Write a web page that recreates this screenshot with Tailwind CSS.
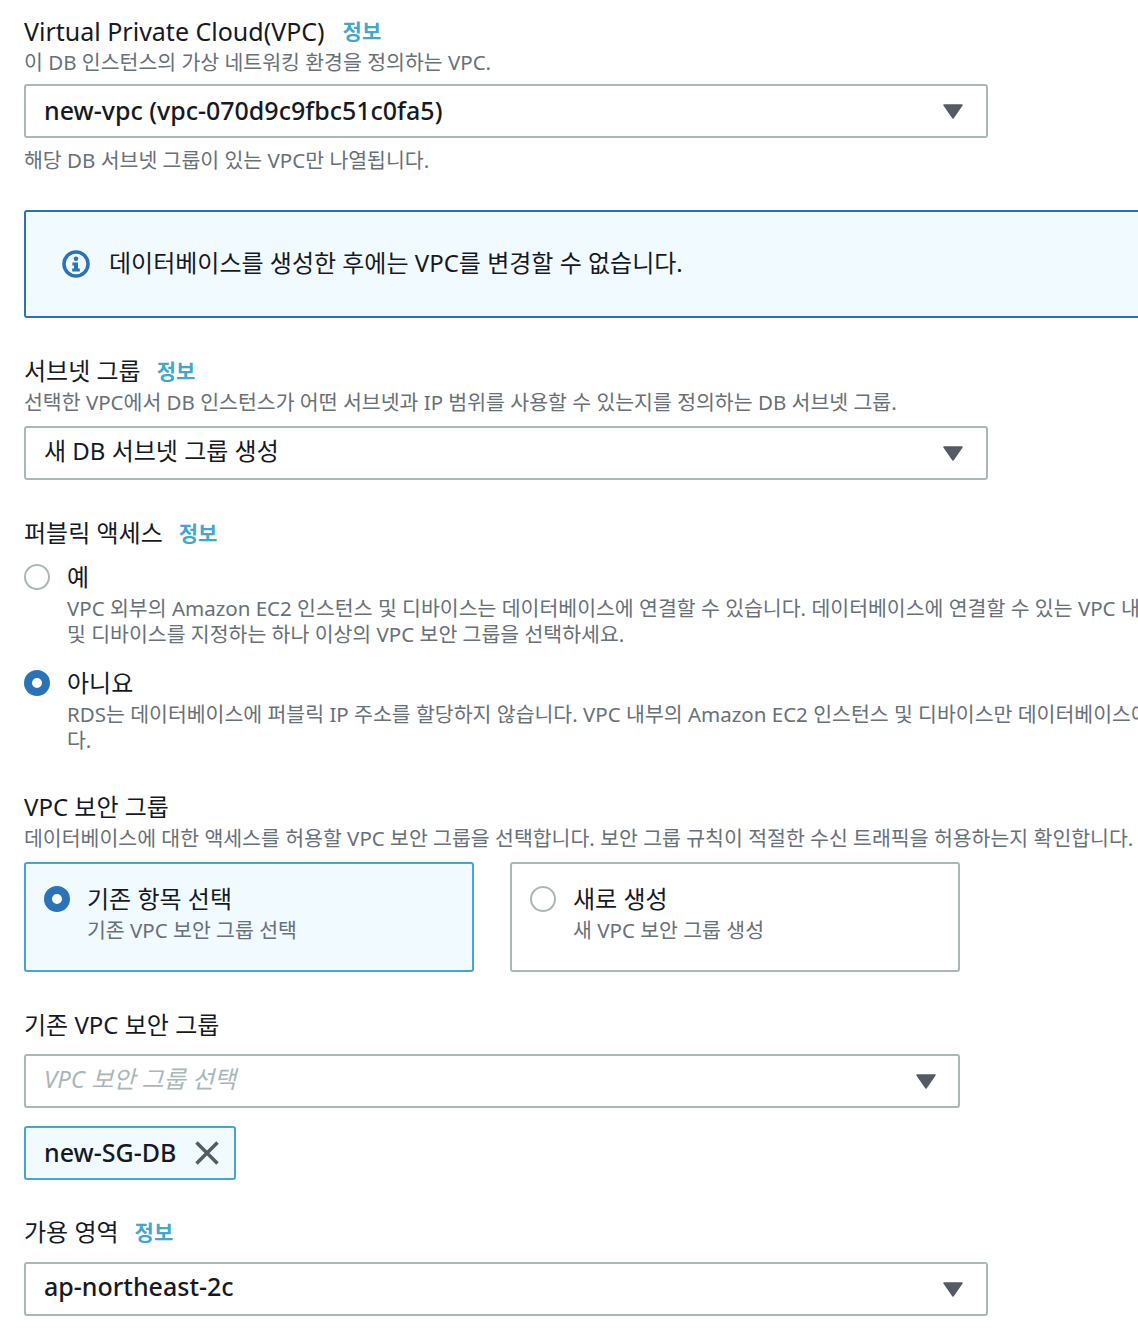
<!DOCTYPE html>
<html lang="ko">
<head>
  <meta charset="UTF-8" />
  <title>연결</title>
  <script src="https://cdn.jsdelivr.net/npm/@tailwindcss/browser@4"></script>
</head>
<body class="bg-white text-[#16191f] font-['Noto_Sans','Noto_Sans_CJK_KR',sans-serif] overflow-hidden">
  <div class="w-[1138px] h-[1334px] overflow-hidden pl-6 pt-[14px] whitespace-nowrap">

    <!-- VPC -->
    <div class="flex items-center h-[34px] leading-[34px]">
      <span class="text-[25px]">Virtual Private Cloud(VPC)</span>
      <a class="ml-[18px] text-[21px] font-bold text-[#44a6cb]">정보</a>
    </div>
    <p class="h-[28px] text-[20.5px] leading-[28px] text-[#687078]">이 DB 인스턴스의 가상 네트워킹 환경을 정의하는 VPC.</p>
    <div class="mt-2 w-[964px] h-[54px] flex items-center justify-between pl-[18px] pr-[23px] border-2 border-[#aab7b8] rounded-[3px] text-[25px] font-medium">
      <span>new-vpc (vpc-070d9c9fbc51c0fa5)</span>
      <svg width="20" height="15" viewBox="0 0 20 15"><path d="M1 1h18L10 14z" fill="#545b64" stroke="#545b64" stroke-linejoin="round" stroke-width="1.5"/></svg>
    </div>
    <p class="mt-[8px] h-[28px] text-[20.5px] leading-[28px] text-[#687078]">해당 DB 서브넷 그룹이 있는 VPC만 나열됩니다.</p>

    <div class="mt-[36px] w-[1200px] h-[108px] flex items-center pl-[36px] bg-[#f1faff] border-2 border-[#2b73b6] rounded-[3px]">
      <svg width="28" height="28" viewBox="0 0 28 28">
        <circle cx="14" cy="14" r="12" fill="none" stroke="#2b73b6" stroke-width="3.5"/>
        <circle cx="14" cy="8.8" r="2.3" fill="#2b73b6"/>
        <path d="M10.4 12.4h5.6v6.2h1.8v3h-7.6v-3h1.8v-3.2h-1.6z" fill="#2b73b6"/>
      </svg>
      <span class="ml-[19px] pb-[2px] text-[24px]">데이터베이스를 생성한 후에는 VPC를 변경할 수 없습니다.</span>
    </div>

    <!-- 서브넷 그룹 -->
    <div class="mt-[36px] flex items-center h-[34px] text-[24px] leading-[34px]">
      <span>서브넷 그룹</span>
      <a class="ml-[16px] text-[21px] font-bold text-[#44a6cb]">정보</a>
    </div>
    <p class="h-[28px] text-[20.5px] leading-[28px] text-[#687078]">선택한 VPC에서 DB 인스턴스가 어떤 서브넷과 IP 범위를 사용할 수 있는지를 정의하는 DB 서브넷 그룹.</p>
    <div class="mt-[10px] w-[964px] h-[54px] flex items-center justify-between pl-[18px] pr-[23px] border-2 border-[#aab7b8] rounded-[3px] text-[24px]">
      <span class="pb-[4px]">새 DB 서브넷 그룹 생성</span>
      <svg width="20" height="15" viewBox="0 0 20 15"><path d="M1 1h18L10 14z" fill="#545b64" stroke="#545b64" stroke-linejoin="round" stroke-width="1.5"/></svg>
    </div>

    <!-- 퍼블릭 액세스 -->
    <div class="mt-[36px] flex items-center h-[34px] text-[24px] leading-[34px]">
      <span>퍼블릭 액세스</span>
      <a class="ml-[16px] text-[21px] font-bold text-[#44a6cb]">정보</a>
    </div>
    <div class="mt-[10px] flex">
      <span class="mt-[4px] size-[26px] shrink-0 rounded-full border-2 border-[#aab7b8]"></span>
      <div class="ml-[17px]">
        <p class="h-[35px] text-[24px] leading-[34px]">예</p>
        <p class="text-[20.5px] leading-[26px] text-[#687078]">VPC 외부의 Amazon EC2 인스턴스 및 디바이스는 데이터베이스에 연결할 수 있습니다. 데이터베이스에 연결할 수 있는 VPC 내부의 EC2 인스턴스<br>및 디바이스를 지정하는 하나 이상의 VPC 보안 그룹을 선택하세요.</p>
      </div>
    </div>
    <div class="mt-[19px] flex">
      <span class="mt-[4px] size-[26px] shrink-0 rounded-full border-[8px] border-[#2b73b6] bg-white"></span>
      <div class="ml-[17px]">
        <p class="h-[35px] text-[24px] leading-[34px]">아니요</p>
        <p class="text-[20.5px] leading-[26px] text-[#687078]">RDS는 데이터베이스에 퍼블릭 IP 주소를 할당하지 않습니다. VPC 내부의 Amazon EC2 인스턴스 및 디바이스만 데이터베이스에 연결할 수 있습니<br>다.</p>
      </div>
    </div>

    <!-- VPC 보안 그룹 -->
    <div class="mt-[37px] h-[34px] text-[24px] leading-[33px]">VPC 보안 그룹</div>
    <p class="h-[28px] text-[20.5px] leading-[28px] text-[#687078]">데이터베이스에 대한 액세스를 허용할 VPC 보안 그룹을 선택합니다. 보안 그룹 규칙이 적절한 수신 트래픽을 허용하는지 확인합니다.</p>
    <div class="mt-[10px] flex gap-9">
      <div class="w-[450px] h-[110px] flex pt-[18px] pl-[18px] bg-[#f1faff] border-2 border-[#44a6cb] rounded-[3px]">
        <span class="mt-[4px] size-[26px] shrink-0 rounded-full border-[8px] border-[#2b73b6] bg-white"></span>
        <div class="ml-[17px]">
          <p class="h-[34px] text-[24px] leading-[34px]">기존 항목 선택</p>
          <p class="h-[28px] text-[20.5px] leading-[28px] text-[#687078]">기존 VPC 보안 그룹 선택</p>
        </div>
      </div>
      <div class="w-[450px] h-[110px] flex pt-[18px] pl-[18px] border-2 border-[#aab7b8] rounded-[3px]">
        <span class="mt-[4px] size-[26px] shrink-0 rounded-full border-2 border-[#aab7b8]"></span>
        <div class="ml-[17px]">
          <p class="h-[34px] text-[24px] leading-[34px]">새로 생성</p>
          <p class="h-[28px] text-[20.5px] leading-[28px] text-[#687078]">새 VPC 보안 그룹 생성</p>
        </div>
      </div>
    </div>

    <!-- 기존 VPC 보안 그룹 -->
    <div class="mt-[36px] h-[34px] text-[24px] leading-[33px]">기존 VPC 보안 그룹</div>
    <div class="mt-[12px] w-[936px] h-[54px] flex items-center justify-between pl-[18px] pr-[22px] border-2 border-[#aab7b8] rounded-[3px] text-[24px] italic text-[#aab7b8]">
      <span class="pb-[4px]">VPC 보안 그룹 선택</span>
      <svg width="20" height="15" viewBox="0 0 20 15"><path d="M1 1h18L10 14z" fill="#545b64" stroke="#545b64" stroke-linejoin="round" stroke-width="1.5"/></svg>
    </div>
    <div class="mt-[18px] w-[212px] h-[54px] flex items-center pl-[18px] bg-[#f1faff] border-2 border-[#44a6cb] rounded-[3px] text-[25px] font-medium">
      <span>new-SG-DB</span>
      <svg class="ml-[19px]" width="24" height="26" viewBox="0 0 24 26"><path d="M1.5 2.5l21 21M22.5 2.5l-21 21" fill="none" stroke="#545b64" stroke-width="3.5"/></svg>
    </div>

    <!-- 가용 영역 -->
    <div class="mt-[35px] flex items-center h-[34px] text-[24px] leading-[34px]">
      <span>가용 영역</span>
      <a class="ml-[16px] text-[21px] font-bold text-[#44a6cb]">정보</a>
    </div>
    <div class="mt-[13px] w-[964px] h-[54px] flex items-center justify-between pl-[18px] pr-[23px] border-2 border-[#aab7b8] rounded-[3px] text-[25px] font-medium">
      <span class="pb-[4px]">ap-northeast-2c</span>
      <svg width="20" height="15" viewBox="0 0 20 15"><path d="M1 1h18L10 14z" fill="#545b64" stroke="#545b64" stroke-linejoin="round" stroke-width="1.5"/></svg>
    </div>
  </div>
</body>
</html>
